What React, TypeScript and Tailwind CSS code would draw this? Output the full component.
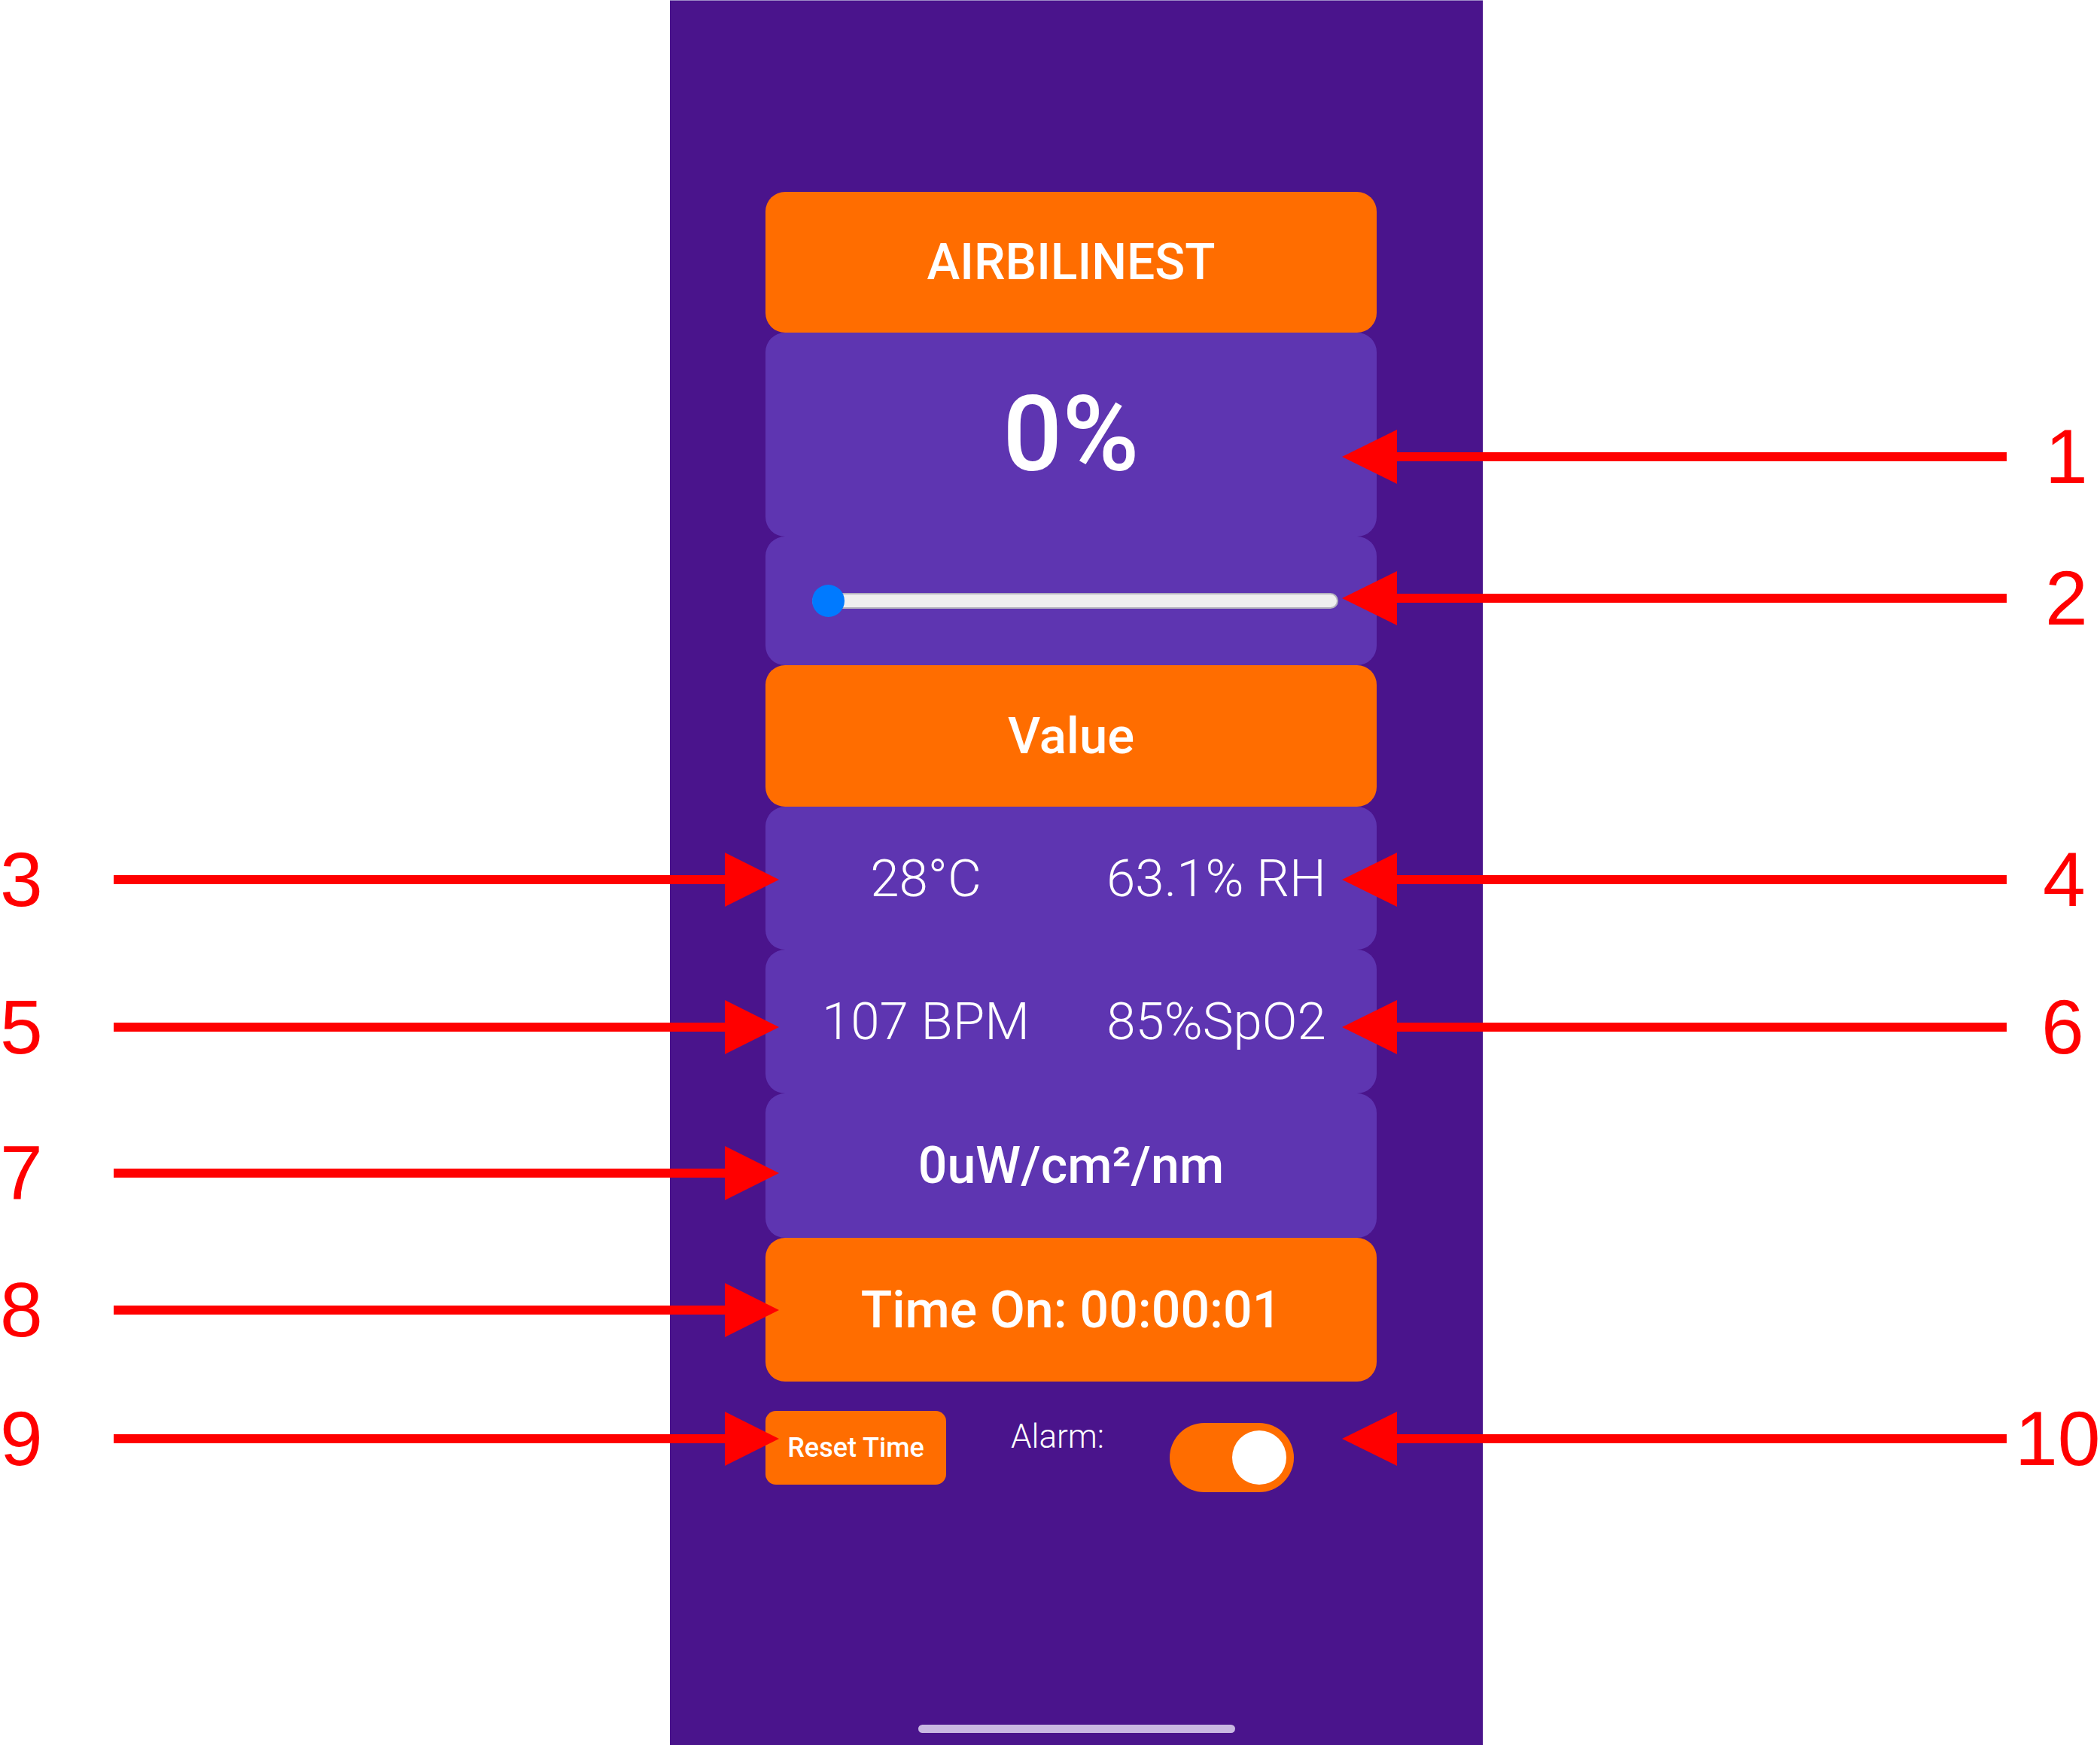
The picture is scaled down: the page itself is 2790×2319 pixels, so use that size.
import React from "react";

const ARROWS_RIGHT = [
  { label: "1", y: 607, x: 2717 },
  { label: "2", y: 795, x: 2717 },
  { label: "4", y: 1169, x: 2714 },
  { label: "6", y: 1365, x: 2712 },
  { label: "10", y: 1912, x: 2677 },
];

const ARROWS_LEFT = [
  { label: "3", y: 1169 },
  { label: "5", y: 1365 },
  { label: "7", y: 1559 },
  { label: "8", y: 1741 },
  { label: "9", y: 1912 },
];

function Card({
  orange,
  className,
  children,
}: {
  orange?: boolean;
  className?: string;
  children: React.ReactNode;
}) {
  return (
    <div
      className={`w-[812px] rounded-[26px] flex items-center justify-center text-white ${
        orange ? "bg-[#ff6d00]" : "bg-[#5e35b1]"
      } ${className ?? ""}`}
    >
      {children}
    </div>
  );
}

function Annotations() {
  return (
    <>
      <svg
        className="absolute left-0 top-0 pointer-events-none"
        width={2790}
        height={2319}
        viewBox="0 0 2790 2319"
      >
        {ARROWS_RIGHT.map((a) => (
          <g key={a.label} fill="#ff0000">
            <rect x={1850} y={a.y - 6} width={816} height={12} />
            <polygon
              points={`1783,${a.y} 1856,${a.y - 36} 1856,${a.y + 36}`}
            />
          </g>
        ))}
        {ARROWS_LEFT.map((a) => (
          <g key={a.label} fill="#ff0000">
            <rect x={151} y={a.y - 6} width={818} height={12} />
            <polygon points={`1035,${a.y} 963,${a.y - 36} 963,${a.y + 36}`} />
          </g>
        ))}
      </svg>
      {ARROWS_RIGHT.map((a) => (
        <div
          key={a.label}
          className="absolute h-[102px] leading-[102px] text-[102px] text-[#ff0000] font-['Liberation_Sans',Arial,sans-serif]"
          style={{ left: a.x, top: a.y - 51 }}
        >
          {a.label}
        </div>
      ))}
      {ARROWS_LEFT.map((a) => (
        <div
          key={a.label}
          className="absolute left-0 h-[102px] leading-[102px] text-[102px] text-[#ff0000] font-['Liberation_Sans',Arial,sans-serif]"
          style={{ top: a.y - 51 }}
        >
          {a.label}
        </div>
      ))}
    </>
  );
}

export default function App() {
  return (
    <div className="relative w-[2790px] h-[2319px] bg-white overflow-hidden font-['Roboto',sans-serif]">
      <div className="ml-[890px] w-[1080px] h-[2319px] bg-[#4a148c] border-t border-[#9d8cc6] flex flex-col">
        <div className="ml-[127px] pt-[254px] flex flex-col">
          <Card orange className="h-[187px]">
            <span className="text-[66px] font-medium leading-none">AIRBILINEST</span>
          </Card>
          <Card className="h-[271px]">
            <span className="text-[139px] font-medium leading-none">0%</span>
          </Card>
          <Card className="h-[171px] !justify-start pl-[62px] pr-[51px]">
            <div className="relative w-full h-[43px] flex items-center">
              <div className="w-full h-[21px] rounded-full bg-[#efefef] border-2 border-[#b3b1bd]" />
              <div className="absolute left-0 top-0 w-[43px] h-[43px] rounded-full bg-[#007aff]" />
            </div>
          </Card>
          <Card orange className="h-[188px]">
            <span className="text-[67px] font-medium leading-none">Value</span>
          </Card>
          <Card className="h-[190px] px-5 !justify-stretch">
            <div className="grid grid-cols-2 w-full text-center text-[69px] font-light leading-none">
              <span>28°C</span>
              <span>63.1% RH</span>
            </div>
          </Card>
          <Card className="h-[191px] px-5 !justify-stretch">
            <div className="grid grid-cols-2 w-full text-center text-[69px] font-light leading-none">
              <span>107 BPM</span>
              <span>85%SpO2</span>
            </div>
          </Card>
          <Card className="h-[192px]">
            <span className="text-[68px] font-medium leading-none">0uW/cm²/nm</span>
          </Card>
          <Card orange className="h-[191px]">
            <span className="text-[68px] font-medium leading-none">Time On: 00:00:01</span>
          </Card>
          <div className="mt-[39px] flex items-start">
            <button className="w-[240px] h-[98px] rounded-[14px] bg-[#ff6d00] text-white text-[36px] font-medium leading-none">
              Reset Time
            </button>
            <span className="ml-[86px] mt-[8px] text-white text-[44px] font-light leading-[52px]">
              Alarm:
            </span>
            <div className="ml-[87px] mt-[16px] w-[165px] h-[92px] rounded-full bg-[#ff6d00] flex items-center justify-end pr-[10px]">
              <div className="w-[72px] h-[72px] rounded-full bg-white" />
            </div>
          </div>
        </div>
        <div className="mt-auto mb-[16px] ml-[330px] w-[421px] h-[11px] rounded-full bg-[#c9b8e2]" />
      </div>
      <Annotations />
    </div>
  );
}
